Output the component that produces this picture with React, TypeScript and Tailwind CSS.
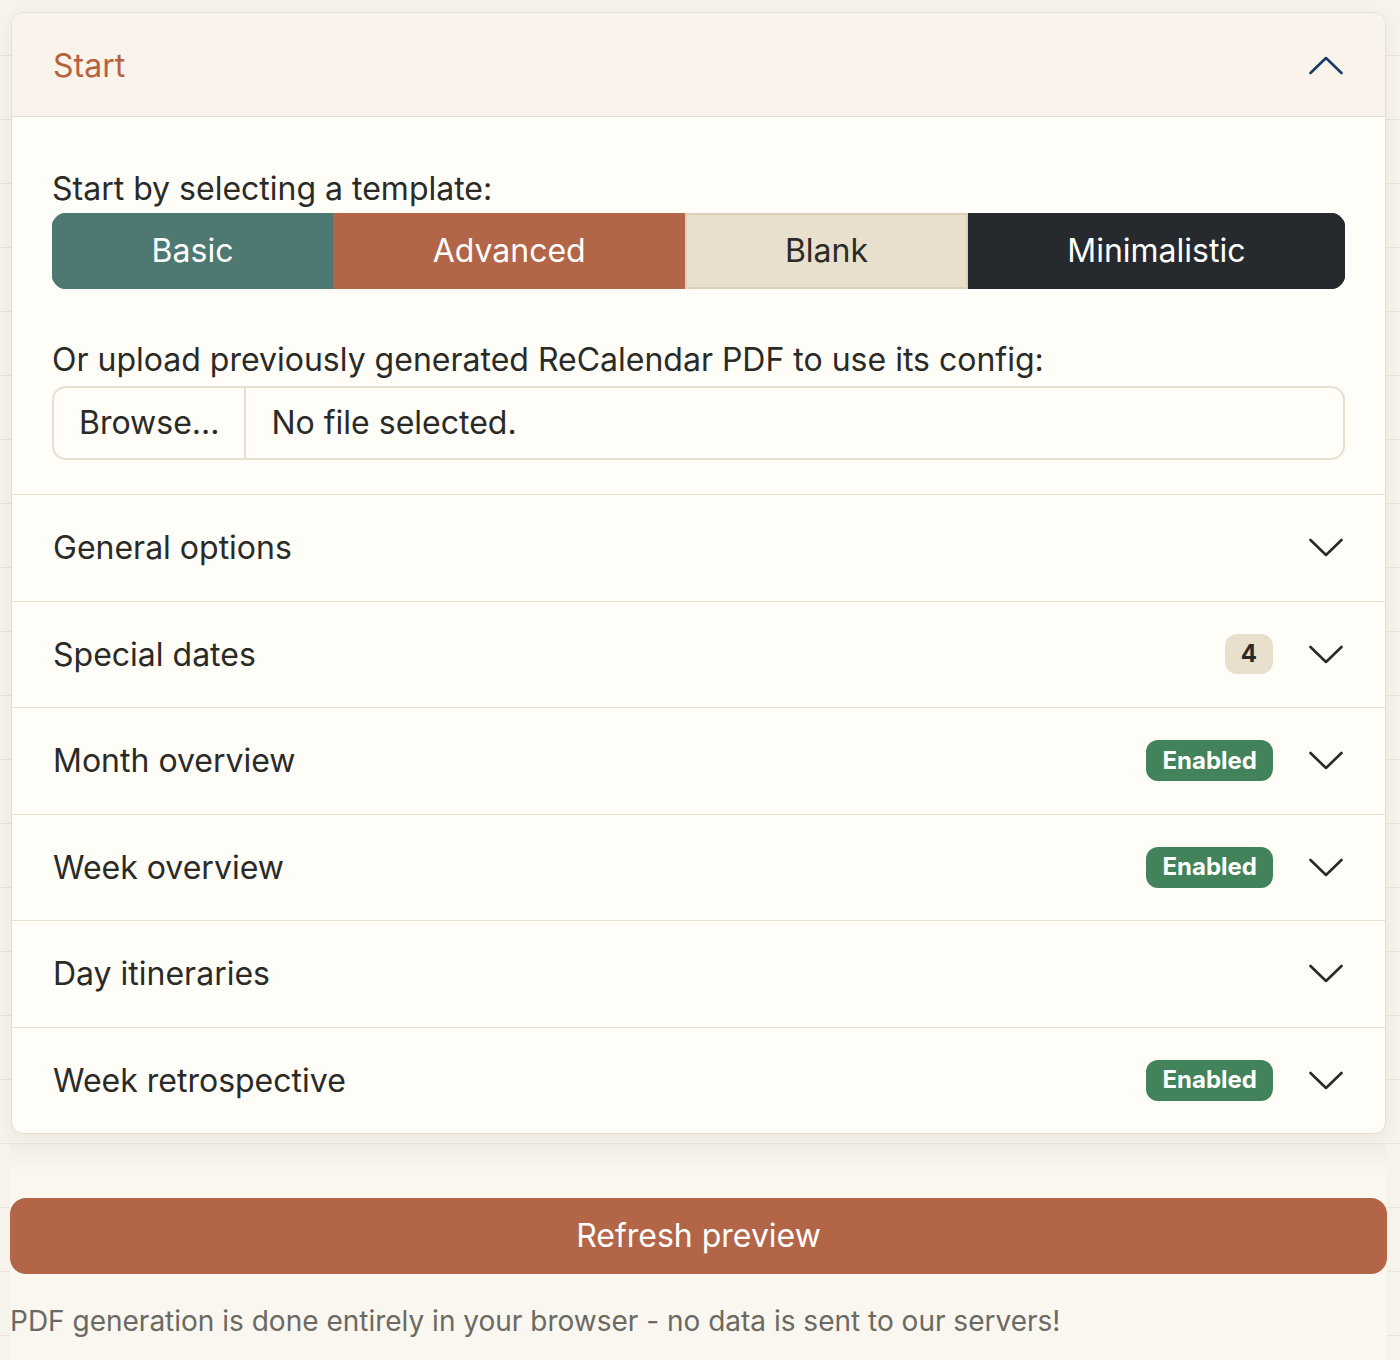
import React from "react";

type Badge = { label: string; kind: "count" | "enabled" };

const sections: { title: string; badge?: Badge }[] = [
  { title: "General options" },
  { title: "Special dates", badge: { label: "4", kind: "count" } },
  { title: "Month overview", badge: { label: "Enabled", kind: "enabled" } },
  { title: "Week overview", badge: { label: "Enabled", kind: "enabled" } },
  { title: "Day itineraries" },
  { title: "Week retrospective", badge: { label: "Enabled", kind: "enabled" } },
];

const Chevron = ({ up = false }: { up?: boolean }) => (
  <svg
    width="34"
    height="19"
    viewBox="0 0 34 19"
    fill="none"
    className={up ? "shrink-0 text-[#1c3a6a]" : "shrink-0 text-[#2a2a28]"}
  >
    <polyline
      points={up ? "1.5,17 17,2 32.5,17" : "1.5,2 17,17 32.5,2"}
      stroke="currentColor"
      strokeWidth="2.6"
      strokeLinecap="round"
      strokeLinejoin="round"
    />
  </svg>
);

const App = () => {
  return (
    <div className="min-h-screen bg-[#f6f3ec] bg-[linear-gradient(to_bottom,#ebe4d9_1px,transparent_1px)] bg-[length:100%_64px] bg-[position:0_55px] font-['Inter','Noto_Sans',sans-serif] text-[#2a2a27]">
      <div className="pl-[10px] pr-[13px] pt-[12px]">
        {/* Accordion card */}
        <div className="mx-px overflow-hidden rounded-[12px] border border-[#e8dfcf] bg-[#fefdf8] shadow-[0_6px_20px_rgba(90,70,40,0.06)]">
          <div className="flex items-center justify-between border-b border-[#e8dfcf] bg-[#faf3ec] pt-[31px] pb-[29px] pl-[41px] pr-[42px]">
            <span className="text-[32px] leading-[43px] text-[#b5633f]">Start</span>
            <Chevron up />
          </div>

          <div className="px-[40px] pt-[48px] pb-[34px]">
            <div className="text-[32px] leading-[48px]">Start by selecting a template:</div>
            <div className="flex h-[76px] overflow-hidden rounded-[14px] text-[32px]">
              <button className="flex-auto border-2 border-[#4e7872] bg-[#4e7872] px-[24px] text-white">Basic</button>
              <button className="flex-auto border-2 border-[#b36548] bg-[#b36548] px-[24px] text-white">Advanced</button>
              <button className="flex-auto border-2 border-[#dccfb6] bg-[#e8dfcc] px-[24px] text-[#2a2a27]">Blank</button>
              <button className="flex-auto border-2 border-[#262a2e] bg-[#262a2e] px-[24px] text-white">Minimalistic</button>
            </div>

            <div className="mt-[47px] mb-[2px] text-[32px] leading-[48px]">
              Or upload previously generated ReCalendar PDF to use its config:
            </div>
            <div className="flex h-[74px] items-stretch overflow-hidden rounded-[14px] border-2 border-[#e8dfcf] text-[32px]">
              <div className="flex items-center border-r-2 border-[#e8dfcf] px-[25px]">Browse...</div>
              <div className="flex items-center pl-[25px]">No file selected.</div>
            </div>
          </div>

          {sections.map((s) => (
            <div
              key={s.title}
              className="flex items-center border-t border-[#e8dfcf] py-[31px] pl-[41px] pr-[42px]"
            >
              <span className="flex-1 text-[32px] leading-[43.5px]">{s.title}</span>
              {s.badge && (
                <span
                  className={
                    s.badge.kind === "enabled"
                      ? "mr-[36px] flex h-[41px] items-center rounded-[12px] bg-[#42835b] px-[16px] text-[24px] font-bold text-white"
                      : "mr-[36px] flex h-[40px] items-center rounded-[12px] bg-[#e8dfcc] px-[16px] text-[24px] font-bold text-[#2a2a27]"
                  }
                >
                  {s.badge.label}
                </span>
              )}
              <Chevron />
            </div>
          ))}
        </div>

        {/* Footer */}
        <div className="mt-[10px] bg-[linear-gradient(to_bottom,#f1ede5,#f9f7f0_28px)] pt-[54px] pb-[18px]">
          <button className="h-[76px] w-full rounded-[16px] bg-[#b36548] text-[32px] text-white">
            Refresh preview
          </button>
          <p className="mt-[26px] text-[28px] leading-[42px] text-[#6b6962]">
            PDF generation is done entirely in your browser - no data is sent to our servers!
          </p>
        </div>
      </div>
    </div>
  );
};

export default App;
